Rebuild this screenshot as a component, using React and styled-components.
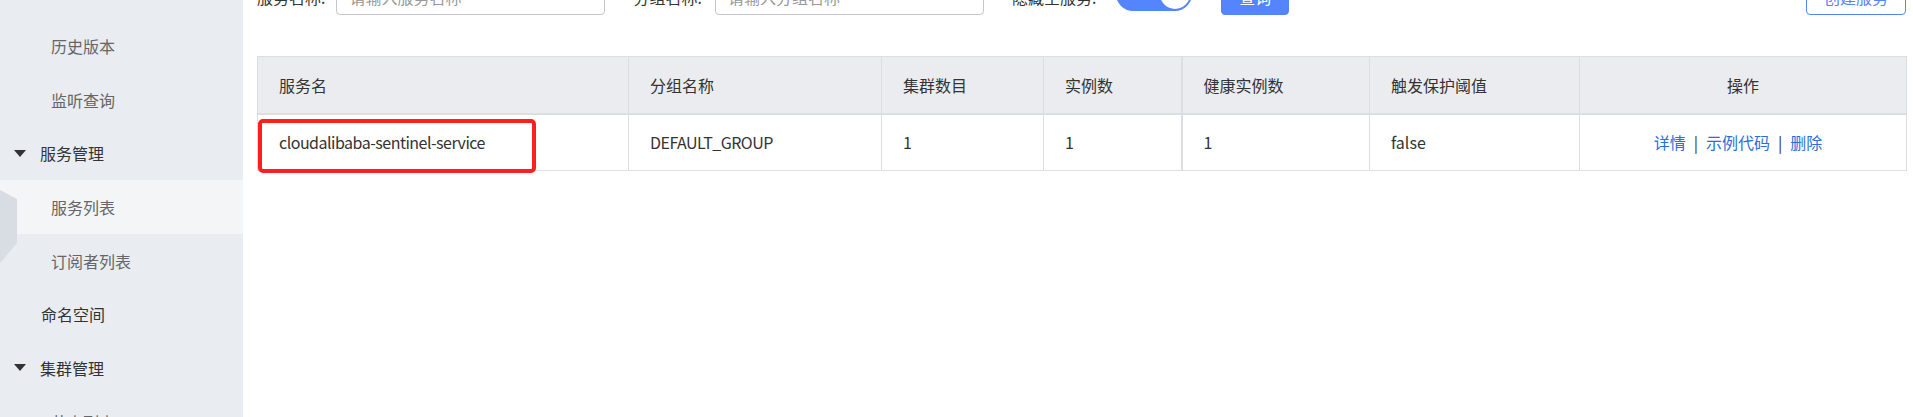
import React from 'react';
import styled, { createGlobalStyle } from 'styled-components';

const Global = createGlobalStyle`
  html, body { margin: 0; padding: 0; background: #fff; overflow: hidden; }
  body {
    font-family: "Noto Sans CJK SC", "Liberation Sans", sans-serif;
    font-size: 16px;
    color: #333;
  }
  * { box-sizing: border-box; }
`;

const Page = styled.div`
  display: flex;
  margin-top: -88px;
  height: 520px;
`;

const Sidebar = styled.nav`
  position: relative;
  width: 243px;
  flex: none;
  background: #e9ecf0;
  padding-top: 107px;
`;

const MenuItem = styled.div`
  height: 53.7px;
  display: flex;
  align-items: center;
  padding-left: ${(p) => (p.$sub ? 51 : p.$group ? 14 : 41)}px;
  background: ${(p) => (p.$active ? '#f4f5f7' : 'transparent')};
  color: ${(p) => (p.$sub ? '#666' : '#333')};
  white-space: nowrap;
`;

const Caret = styled.span`
  width: 0;
  height: 0;
  border-left: 6px solid transparent;
  border-right: 6px solid transparent;
  border-top: 7px solid #333;
  margin-right: 14px;
`;

const Handle = styled.svg`
  position: absolute;
  left: 0;
  top: 278px;
`;

const Main = styled.main`
  flex: 1;
  min-width: 0;
  padding: 67px 7px 0 14px;
`;

const Toolbar = styled.div`
  display: flex;
  align-items: center;
  height: 36px;
`;

const Label = styled.label`
  margin-right: ${(p) => p.$gap || 11}px;
  white-space: nowrap;
  color: #333;
`;

const Input = styled.input`
  width: 269px;
  height: 36px;
  border: 1px solid #c4c6cf;
  border-radius: 4px;
  padding: 0 12px;
  font: inherit;
  color: #333;
  margin-right: 28px;
  &::placeholder { color: #999; }
`;

const Switch = styled.div`
  width: 76px;
  height: 34px;
  border-radius: 17px;
  background: #5584ff;
  display: flex;
  align-items: center;
  justify-content: flex-end;
  padding: 2px;
  margin-right: 29px;
  margin-bottom: 6px;
`;

const Knob = styled.div`
  width: 30px;
  height: 30px;
  border-radius: 50%;
  background: #fff;
`;

const Button = styled.button`
  height: 36px;
  padding: 0 17px;
  border-radius: 4px;
  font: inherit;
  border: 1px solid #5584ff;
  background: ${(p) => (p.$outline ? '#fff' : '#5584ff')};
  color: ${(p) => (p.$outline ? '#5584ff' : '#fff')};
  margin-left: ${(p) => (p.$push ? 'auto' : '0')};
`;

const Table = styled.table`
  width: 100%;
  margin-top: 41px;
  border-collapse: collapse;
  table-layout: fixed;
  border: 1px solid #dcdee3;
`;

const Th = styled.th`
  height: 57px;
  background: #ebecf0;
  font-weight: normal;
  text-align: ${(p) => (p.$center ? 'center' : 'left')};
  padding: 0 0 0 ${(p) => (p.$center ? 0 : 21)}px;
  color: #333;
  border-bottom: 2px solid #dcdee3;
  border-left: ${(p) => (p.$thick ? 2 : 1)}px solid #dcdee3;
`;

const Td = styled.td`
  position: relative;
  height: 57px;
  text-align: ${(p) => (p.$center ? 'center' : 'left')};
  padding: 0 ${(p) => (p.$center ? 10 : 0)}px 0 ${(p) => (p.$center ? 0 : 21)}px;
  color: #333;
  letter-spacing: ${(p) => (p.$latin ? '-0.5px' : 'normal')};
  border-left: ${(p) => (p.$thick ? 2 : 1)}px solid #dcdee3;
`;

const Highlight = styled.div`
  position: absolute;
  left: 0;
  top: 4px;
  width: 278px;
  height: 54px;
  border: 4px solid #ff1f1f;
  border-radius: 5px;
  pointer-events: none;
`;

const Link = styled.a`
  color: #2a6ed6;
  text-decoration: none;
  cursor: pointer;
`;

const Sep = styled.span`
  margin: 0 8px;
  color: #333;
`;

const cols = [371, 253, 162, 138, 188, 210, 327];

export default function App() {
  return (
    <>
      <Global />
      <Page>
        <Sidebar>
          <MenuItem $sub>历史版本</MenuItem>
          <MenuItem $sub>监听查询</MenuItem>
          <MenuItem $group><Caret />服务管理</MenuItem>
          <MenuItem $sub $active>服务列表</MenuItem>
          <MenuItem $sub>订阅者列表</MenuItem>
          <MenuItem>命名空间</MenuItem>
          <MenuItem $group><Caret />集群管理</MenuItem>
          <MenuItem $sub>节点列表</MenuItem>
          <Handle width="18" height="74" viewBox="0 0 18 74">
            <polygon points="0,0 17,9 17,53 0,73" fill="#d8dce3" />
          </Handle>
        </Sidebar>
        <Main>
          <Toolbar>
            <Label>服务名称:</Label>
            <Input placeholder="请输入服务名称" />
            <Label $gap={13}>分组名称:</Label>
            <Input placeholder="请输入分组名称" />
            <Label $gap={20}>隐藏空服务:</Label>
            <Switch><Knob /></Switch>
            <Button>查询</Button>
            <Button $outline $push>创建服务</Button>
          </Toolbar>
          <Table>
            <colgroup>
              {cols.map((w, i) => <col key={i} style={{ width: w }} />)}
            </colgroup>
            <thead>
              <tr>
                <Th>服务名</Th>
                <Th>分组名称</Th>
                <Th>集群数目</Th>
                <Th>实例数</Th>
                <Th $thick>健康实例数</Th>
                <Th>触发保护阈值</Th>
                <Th $center>操作</Th>
              </tr>
            </thead>
            <tbody>
              <tr>
                <Td $latin>cloudalibaba-sentinel-service<Highlight /></Td>
                <Td $latin>DEFAULT_GROUP</Td>
                <Td>1</Td>
                <Td>1</Td>
                <Td $thick>1</Td>
                <Td>false</Td>
                <Td $center>
                  <Link>详情</Link>
                  <Sep>|</Sep>
                  <Link>示例代码</Link>
                  <Sep>|</Sep>
                  <Link>删除</Link>
                </Td>
              </tr>
            </tbody>
          </Table>
        </Main>
      </Page>
    </>
  );
}
